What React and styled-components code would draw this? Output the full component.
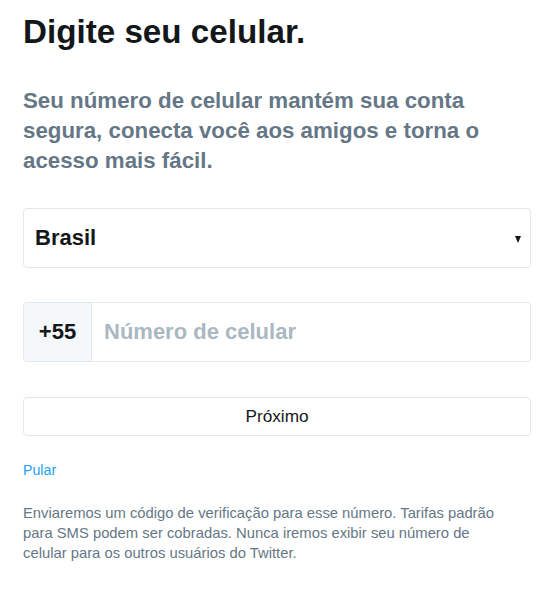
import React from "react";
import styled, { createGlobalStyle } from "styled-components";

const GlobalStyle = createGlobalStyle`
  html, body {
    margin: 0;
    padding: 0;
    background: #fff;
  }
  body {
    font-family: "Liberation Sans", Arial, sans-serif;
  }
`;

const Page = styled.div`
  padding: 12px 16px 20px 23px;
  width: 508px;
`;

const Title = styled.h1`
  margin: 0;
  font-size: 33.2px;
  line-height: 40px;
  font-weight: 700;
  color: #14171a;
`;

const Subtitle = styled.p`
  margin: 34px 0 0;
  font-size: 22.3px;
  line-height: 30px;
  font-weight: 700;
  color: #657786;
`;

const Field = styled.div`
  display: flex;
  align-items: stretch;
  height: 58px;
  margin-top: ${(p) => p.$top}px;
  border: 1px solid #e1e8ed;
  border-radius: 4px;
  background: #fff;
  overflow: hidden;
`;

const SelectLabel = styled.div`
  flex: 1;
  display: flex;
  align-items: center;
  justify-content: space-between;
  padding: 0 9px 0 11px;
  font-size: 22px;
  font-weight: 700;
  color: #14171a;
`;

const Caret = styled.span`
  width: 0;
  height: 0;
  border-left: 3.5px solid transparent;
  border-right: 3.5px solid transparent;
  border-top: 7px solid #14171a;
  margin-top: 2px;
`;

const Prefix = styled.div`
  width: 67px;
  display: flex;
  align-items: center;
  justify-content: center;
  background: #f5f8fa;
  border-right: 1px solid #e1e8ed;
  font-size: 22px;
  font-weight: 700;
  color: #14171a;
`;

const PhoneInput = styled.input`
  flex: 1;
  border: none;
  outline: none;
  padding: 0 12px;
  font-family: inherit;
  font-size: 22px;
  font-weight: 700;
  color: #14171a;
  &::placeholder {
    color: #aab8c2;
  }
`;

const NextButton = styled.button`
  display: block;
  width: 100%;
  height: 39px;
  margin-top: 35px;
  border: 1px solid #e1e8ed;
  border-radius: 4px;
  background: #fff;
  font-family: inherit;
  font-size: 17.2px;
  color: #14171a;
`;

const SkipLink = styled.a`
  display: inline-block;
  margin-top: 24px;
  font-size: 14.2px;
  line-height: 20px;
  color: #1da1f2;
  text-decoration: none;
`;

const Note = styled.p`
  margin: 23px 0 0;
  max-width: 488px;
  font-size: 14.8px;
  line-height: 20px;
  color: #657786;
`;

export default function App() {
  return (
    <>
      <GlobalStyle />
      <Page>
        <Title>Digite seu celular.</Title>
        <Subtitle>
          Seu número de celular mantém sua conta segura, conecta você aos
          amigos e torna o acesso mais fácil.
        </Subtitle>

        <Field $top={32}>
          <SelectLabel>
            Brasil
            <Caret />
          </SelectLabel>
        </Field>

        <Field $top={34}>
          <Prefix>+55</Prefix>
          <PhoneInput placeholder="Número de celular" />
        </Field>

        <NextButton>Próximo</NextButton>

        <div>
          <SkipLink href="#">Pular</SkipLink>
        </div>

        <Note>
          Enviaremos um código de verificação para esse número. Tarifas padrão
          para SMS podem ser cobradas. Nunca iremos exibir seu número de
          celular para os outros usuários do Twitter.
        </Note>
      </Page>
    </>
  );
}
